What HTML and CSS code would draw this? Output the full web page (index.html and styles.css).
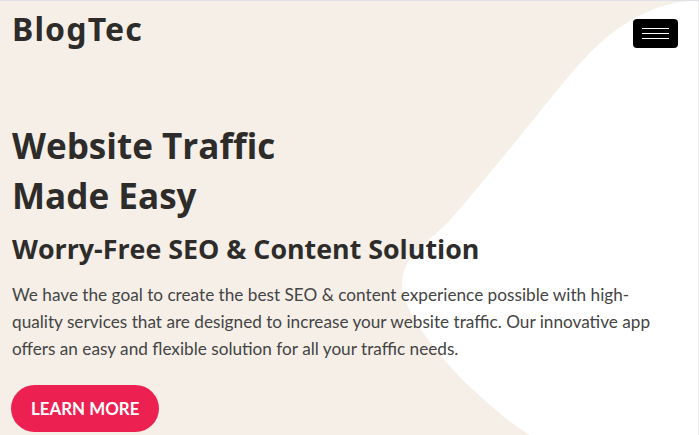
FILE: index.html
```html
<html lang="en">
<head>
  <meta charset="UTF-8">
  <meta name="viewport" content="width=device-width, initial-scale=1.0">
  <title>BlogTec</title>
  <link rel="stylesheet" href="styles.css">
</head>
<body>
  <svg class="hero-shape" viewBox="0 0 699 435" aria-hidden="true">
    <path d="M699 1 L690 1 C660 3 635 16 612 33 C580 57 540 113 503 157 C485 178 468 200 450 220 C432 240 402 255 402 283 C402 312 440 358 470 387 C490 405 510 424 532 436 L699 436 Z" fill="#fff"/>
  </svg>
  <nav class="navbar">
    <a class="logo" href="#">BlogTec</a>
    <button class="toggler" aria-label="Menu">
      <span></span>
      <span></span>
      <span></span>
    </button>
  </nav>
  <section class="hero">
    <h1>Website Traffic<br>Made Easy</h1>
    <h2>Worry-Free SEO &amp; Content Solution</h2>
    <p>We have the goal to create the best SEO &amp; content experience possible with high-quality services that are designed to increase your website traffic. Our innovative app offers an easy and flexible solution for all your traffic needs.</p>
    <a class="btn" href="#">LEARN MORE</a>
  </section>
</body>
</html>
```
FILE: styles.css
```css
html,
body {
  height: 100%;
}

body {
  margin: 0;
  background: #f5efe8;
  border-top: 1px solid #dfe1e8;
  border-right: 1px solid #eeeeee;
  box-sizing: border-box;
  overflow: hidden;
  position: relative;
  color: #2e2c2a;
  font-family: "Lato", sans-serif;
}

.hero-shape {
  position: absolute;
  top: -1px;
  left: 0;
  width: 699px;
  height: 435px;
}

.navbar {
  position: relative;
  display: flex;
  justify-content: space-between;
  align-items: flex-start;
  padding: 8px 20px 0 12px;
}

.logo {
  font-family: "Noto Sans", sans-serif;
  font-weight: 700;
  font-size: 32px;
  line-height: 40px;
  letter-spacing: 1.15px;
  color: #2e2c2a;
  text-decoration: none;
}

.toggler {
  display: flex;
  flex-direction: column;
  justify-content: center;
  gap: 4px;
  width: 45px;
  height: 29px;
  margin-top: 10px;
  padding: 0 9px;
  background: #000;
  border: 0;
  border-radius: 4px;
}

.toggler span {
  display: block;
  height: 1px;
  background: #fff;
}

.hero {
  position: relative;
  padding: 71px 12px 0;
}

.hero h1 {
  margin: 0;
  font-family: "Open Sans", sans-serif;
  font-weight: 700;
  font-size: 35.1px;
  line-height: 50px;
}

.hero h2 {
  margin: 9px 0 0;
  font-family: "Open Sans", sans-serif;
  font-weight: 700;
  font-size: 26.8px;
  line-height: 40px;
}

.hero p {
  margin: 12px 0 0;
  max-width: 655px;
  font-size: 17.2px;
  line-height: 27px;
  color: #444;
}

.btn {
  display: inline-block;
  margin: 23px 0 0 -1px;
  padding: 0 20px;
  height: 47px;
  line-height: 47px;
  border-radius: 24px;
  background: #ec2152;
  color: #fff;
  font-weight: 700;
  font-size: 16.9px;
  text-decoration: none;
}
```
